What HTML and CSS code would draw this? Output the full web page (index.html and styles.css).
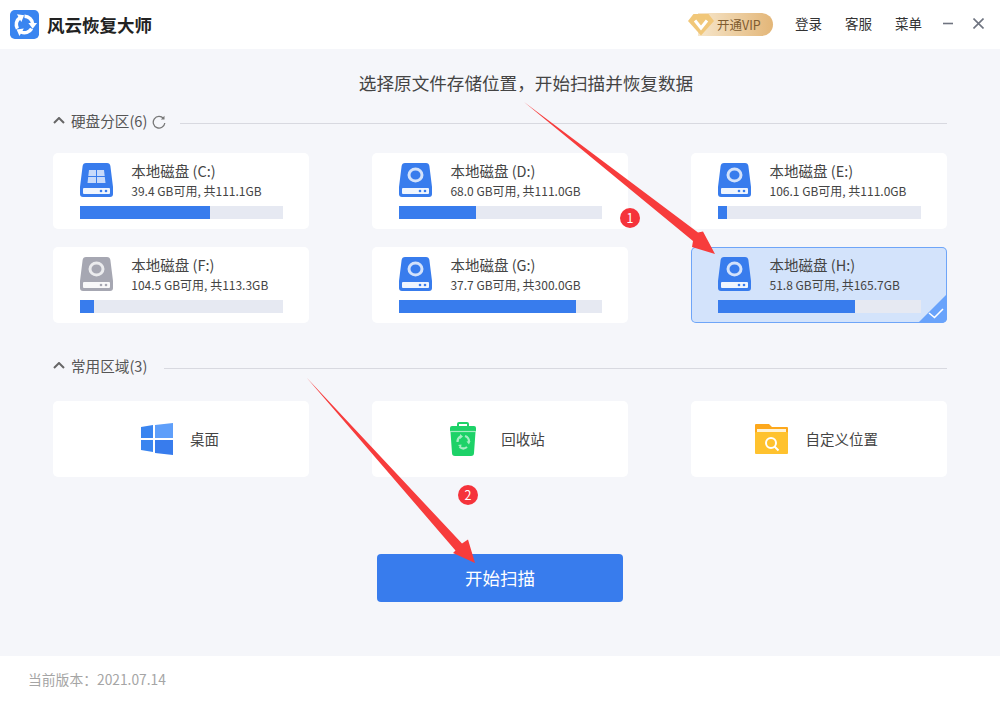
FILE: index.html
```html
<!DOCTYPE html>
<html lang="zh-CN">
<head>
    <meta charset="UTF-8">
    <title>风云恢复大师</title>
    <link rel="stylesheet" href="styles.css">
</head>
<body>
    <svg class="sprites" width="0" height="0">
        <symbol id="disk" viewBox="0 0 33 34">
            <path d="M6 0h21c2 0 3 1 3.400 3L33 24H0L2.600 3C3 1 4 0 6 0z"/>
            <path d="M0 24h33v7c0 2-1 3-3 3H3c-2 0-3-1-3-3z"/>
            <rect x="3" y="25" width="27" height="6" rx="1" fill="#fff" opacity=".92"/>
            <circle cx="21" cy="28" r="1.300" fill="currentColor"/>
            <circle cx="26" cy="28" r="1.300" fill="currentColor"/>
        </symbol>
        <symbol id="ring" viewBox="0 0 33 34">
            <ellipse cx="16.500" cy="12" rx="6.500" ry="6" fill="none" stroke="#fff" stroke-opacity=".78" stroke-width="3"/>
        </symbol>
        <symbol id="swoosh" viewBox="0 0 30 30">
            <path d="M15 6.500a8.500 8.500 0 0 1 8.500 7.800" fill="none" stroke="#fff" stroke-width="3.600"/>
            <path d="M19 13.500h9l-4.500 6z" fill="#fff"/>
        </symbol>
    </svg>
    <div class="app">
        <header class="topbar">
            <svg class="logo" viewBox="0 0 30 30">
                <rect width="30" height="30" rx="5" fill="#3a85f0"/>
                <use href="#swoosh" width="30" height="30"/>
                <use href="#swoosh" width="30" height="30" transform="rotate(120 15 15)"/>
                <use href="#swoosh" width="30" height="30" transform="rotate(240 15 15)"/>
            </svg>
            <span class="brand">风云恢复大师</span>
            <div class="vip">
                <svg class="vip-gem" viewBox="0 0 26 23">
                    <path d="M5.500 1h15l5.500 7-13 14.500L0 8z" fill="#f1c779"/>
                    <path d="M7 7.500l6 7.500 6-7.500" fill="none" stroke="#fff" stroke-width="3"/>
                </svg>
                <span>开通VIP</span>
            </div>
            <nav class="nav">
                <a>登录</a>
                <a>客服</a>
                <a>菜单</a>
            </nav>
            <svg class="winbtn min" viewBox="0 0 11 11"><path d="M0 5.500h10" stroke="#6f7480" stroke-width="1.600"/></svg>
            <svg class="winbtn" viewBox="0 0 11 11"><path d="M.5.500l10 10M10.500.500l-10 10" stroke="#6f7480" stroke-width="1.600"/></svg>
        </header>

        <main class="content">
            <h1 class="headline">选择原文件存储位置，开始扫描并恢复数据</h1>

            <div class="section-head">
                <svg class="chevron" viewBox="0 0 12 7"><path d="M1 6l5-5 5 5" fill="none" stroke="#666" stroke-width="2"/></svg>
                <span class="section-title">硬盘分区(6)</span>
                <svg class="refresh" viewBox="0 0 14 14"><path d="M11.500 3.500A5.800 5.800 0 1 0 12.800 8" fill="none" stroke="#777" stroke-width="1.300"/><path d="M12.500 .8v3.700H8.800z" fill="#777"/></svg>
                <div class="rule"></div>
            </div>
            <div class="grid">
                <div class="card">
                    <div class="card-top">
                        <svg class="disk blue">
                            <use href="#disk"/>
                            <path d="M9 7h7v6H8.300zM17 7h7l.7 6H17zM8.200 14H16v6H7.500zM17 14h7.800l.7 6H17z" fill="#fff" opacity=".72"/>
                        </svg>
                        <div>
                            <div class="name">本地磁盘 (C:)</div>
                            <div class="size">39.4 GB可用, 共111.1GB</div>
                        </div>
                    </div>
                    <div class="bar"><div class="fill" style="width:64%"></div></div>
                </div>
                <div class="card">
                    <div class="card-top">
                        <svg class="disk blue"><use href="#disk"/><use href="#ring"/></svg>
                        <div>
                            <div class="name">本地磁盘 (D:)</div>
                            <div class="size">68.0 GB可用, 共111.0GB</div>
                        </div>
                    </div>
                    <div class="bar"><div class="fill" style="width:38%"></div></div>
                </div>
                <div class="card">
                    <div class="card-top">
                        <svg class="disk blue"><use href="#disk"/><use href="#ring"/></svg>
                        <div>
                            <div class="name">本地磁盘 (E:)</div>
                            <div class="size">106.1 GB可用, 共111.0GB</div>
                        </div>
                    </div>
                    <div class="bar"><div class="fill" style="width:4%"></div></div>
                </div>
                <div class="card">
                    <div class="card-top">
                        <svg class="disk grey"><use href="#disk"/><use href="#ring"/></svg>
                        <div>
                            <div class="name">本地磁盘 (F:)</div>
                            <div class="size">104.5 GB可用, 共113.3GB</div>
                        </div>
                    </div>
                    <div class="bar"><div class="fill" style="width:7%"></div></div>
                </div>
                <div class="card">
                    <div class="card-top">
                        <svg class="disk blue"><use href="#disk"/><use href="#ring"/></svg>
                        <div>
                            <div class="name">本地磁盘 (G:)</div>
                            <div class="size">37.7 GB可用, 共300.0GB</div>
                        </div>
                    </div>
                    <div class="bar"><div class="fill" style="width:87%"></div></div>
                </div>
                <div class="card selected">
                    <div class="card-top">
                        <svg class="disk blue"><use href="#disk"/><use href="#ring"/></svg>
                        <div>
                            <div class="name">本地磁盘 (H:)</div>
                            <div class="size">51.8 GB可用, 共165.7GB</div>
                        </div>
                    </div>
                    <div class="bar"><div class="fill" style="width:67.500%"></div></div>
                    <svg class="tick" viewBox="0 0 29 29">
                        <path d="M29 0v24a5 5 0 0 1-5 5H0z" fill="#69a3fb"/>
                        <path d="M11 19l5.500 4.500L25 15" fill="none" stroke="#fff" stroke-width="1.600"/>
                    </svg>
                </div>
            </div>

            <div class="section-head second">
                <svg class="chevron" viewBox="0 0 12 7"><path d="M1 6l5-5 5 5" fill="none" stroke="#666" stroke-width="2"/></svg>
                <span class="section-title">常用区域(3)</span>
                <div class="rule"></div>
            </div>
            <div class="grid">
                <div class="card place desktop">
                    <svg class="place-icon" viewBox="0 0 33 32">
                        <path d="M1 4l12-2v13H1z" fill="#3a85f0"/>
                        <path d="M15 2l18-2v15H15z" fill="#5f9ffa"/>
                        <path d="M1 17h12v12L1 27z" fill="#3a85f0"/>
                        <path d="M15 17h18v15l-18-2z" fill="#387ced"/>
                    </svg>
                    <span>桌面</span>
                </div>
                <div class="card place recycle">
                    <svg class="place-icon" viewBox="0 0 26 34">
                        <path d="M7 4V2a2 2 0 0 1 2-2h8a2 2 0 0 1 2 2v2h5a2 2 0 0 1 2 2v4h-.5L24 31a3 3 0 0 1-3 3H5a3 3 0 0 1-3-3L.5 10H0V6a2 2 0 0 1 2-2zm2 0h8V2H9z" fill="#1dd268" fill-rule="evenodd"/>
                        <path d="M0 9.500h26" stroke="#a5edc3" stroke-width="1.200"/>
                        <path d="M7.500 20a6 6 0 0 1 3-5.500M15 14a6 6 0 0 1 4 6M17 25a6 6 0 0 1-7.500 0" fill="none" stroke="#a5edc3" stroke-width="2.200"/>
                        <path d="M10 12l3 2.500-3 2.500zM20.500 19l-1.500 3.500-2.500-3zM8 23l3.500-.5-.5 3.500z" fill="#a5edc3"/>
                    </svg>
                    <span>回收站</span>
                </div>
                <div class="card place">
                    <svg class="place-icon" viewBox="0 0 33 30">
                        <path d="M1 0h13l3 3h15a1 1 0 0 1 1 1v5H0V1a1 1 0 0 1 1-1z" fill="#fda81c"/>
                        <rect x="2" y="5" width="29" height="3" fill="#fff3d6"/>
                        <rect y="8" width="33" height="22" rx="1" fill="#ffc22e"/>
                        <circle cx="16" cy="19" r="5" fill="none" stroke="#fff" stroke-width="2"/>
                        <path d="M19.500 22.500l4 4" stroke="#fff" stroke-width="2"/>
                    </svg>
                    <span>自定义位置</span>
                </div>
            </div>

            <button class="scan">开始扫描</button>
        </main>

        <footer class="footer">当前版本：2021.07.14</footer>

        <svg class="marks" viewBox="0 0 1000 703">
            <path d="M524 102L698 232.500l5-1 12 22.500-23-7 1-6z" fill="#f73c3c"/>
            <path d="M306.500 377.500L462 543.500l6-4 7 23.500-22-10 2.500-2.500z" fill="#f73c3c"/>
        </svg>
        <span class="step one">1</span>
        <span class="step two">2</span>
    </div>
</body>
</html>
```

FILE: styles.css
```css
* {
    box-sizing: border-box;
}
body {
    margin: 0;
    font-family: "Noto Sans CJK SC", "Noto Sans", sans-serif;
    color: #333;
}
.sprites {
    position: absolute;
}
.app {
    position: relative;
    display: flex;
    flex-direction: column;
    width: 1000px;
    height: 703px;
    overflow: hidden;
    background: #fff;
}
.topbar {
    display: flex;
    align-items: center;
    height: 49px;
    padding: 0 16px 0 10px;
    background: #fff;
}
.logo {
    width: 29px;
    height: 29px;
}
.brand {
    margin-left: 8px;
    font-size: 17.500px;
    font-weight: 700;
    color: #222;
}
.vip {
    display: flex;
    align-items: center;
    width: 85px;
    height: 23px;
    margin-left: auto;
    border-radius: 0 12px 12px 0;
    background: linear-gradient(to right, transparent 10px, #f6e6cb 10px, #e3b678);
    font-size: 12.500px;
    color: #7f5c30;
}
.vip-gem {
    width: 26px;
    height: 23px;
    margin-right: 3px;
}
.nav {
    display: flex;
    gap: 23px;
    margin-left: 22px;
    padding-bottom: 3px;
    font-size: 13.500px;
    color: #333;
}
.winbtn {
    width: 11px;
    height: 11px;
    margin-bottom: 2px;
    margin-left: 19px;
}
.min {
    margin-left: 21px;
}
.content {
    flex: 1;
    padding: 22px 53px 0;
    background: #f5f6fa;
}
.headline {
    margin: 0;
    padding-left: 52px;
    font-size: 17.600px;
    font-weight: 400;
    line-height: 24px;
    text-align: center;
    color: #444;
}
.section-head {
    display: flex;
    align-items: center;
    height: 20px;
    margin-top: 17px;
    font-size: 14.600px;
    color: #555;
}
.section-head.second {
    margin-top: 34px;
}
.section-title {
    padding-bottom: 3px;
}
.chevron {
    width: 12px;
    height: 7px;
    margin-right: 6px;
    margin-bottom: 3px;
}
.refresh {
    width: 14px;
    height: 14px;
    margin-left: 5px;
}
.rule {
    flex: 1;
    height: 1px;
    margin-top: 2px;
    margin-left: 14px;
    background: #d8d9e0;
}
.second .rule {
    margin-left: 17px;
}
.grid {
    display: grid;
    grid-template-columns: repeat(3, 256px);
    grid-auto-rows: 76px;
    gap: 18px 63.100px;
    margin-top: 21px;
}
.second + .grid {
    margin-top: 24px;
}
.card {
    position: relative;
    padding: 10px 26px 0 27.300px;
    border-radius: 5px;
    background: #fff;
}
.card-top {
    display: flex;
    gap: 18px;
    height: 34px;
    margin-bottom: 9px;
}
.disk {
    flex: none;
    width: 33px;
    height: 34px;
}
.blue {
    fill: #387ced;
    color: #387ced;
}
.grey {
    fill: #a6a7b2;
    color: #a6a7b2;
}
.name {
    font-size: 14.500px;
    line-height: 16px;
    color: #444;
}
.size {
    margin-top: 3px;
    font-size: 12px;
    line-height: 18px;
    white-space: nowrap;
    color: #444;
}
.bar {
    height: 13px;
    background: #e6e9f2;
}
.fill {
    height: 100%;
    background: #387ced;
}
.selected {
    background: #d3e3fb;
    box-shadow: inset 0 0 0 1px #6ea5f8;
}
.tick {
    position: absolute;
    right: 0;
    bottom: 0;
    width: 29px;
    height: 29px;
}
.place {
    display: flex;
    align-items: center;
    justify-content: center;
    gap: 17px;
    padding: 0 5px 0 0;
    font-size: 14.500px;
    color: #444;
}
.place span {
    padding-bottom: 2px;
}
.desktop {
    padding-right: 3px;
}
.place-icon {
    width: 33px;
    height: 32px;
}
.recycle {
    gap: 25px;
}
.recycle .place-icon {
    width: 26px;
    height: 34px;
}
.scan {
    display: block;
    width: 246px;
    height: 48px;
    margin: 77px auto 0;
    padding: 0 0 2px;
    border: 0;
    border-radius: 4px;
    background: #387ced;
    font-family: inherit;
    font-size: 17.500px;
    color: #fff;
}
.footer {
    display: flex;
    align-items: center;
    height: 47px;
    padding: 0 0 2px 28px;
    font-size: 13.800px;
    color: #a5a5a5;
}
.marks {
    position: absolute;
    top: 0;
    left: 0;
    width: 1000px;
    height: 703px;
    pointer-events: none;
}
.step {
    position: absolute;
    width: 20px;
    height: 20px;
    border-radius: 50%;
    background: #f5333b;
    font-size: 12.500px;
    line-height: 20px;
    text-align: center;
    color: #fff;
}
.one {
    top: 208px;
    left: 620px;
}
.two {
    top: 485px;
    left: 458px;
}
```
